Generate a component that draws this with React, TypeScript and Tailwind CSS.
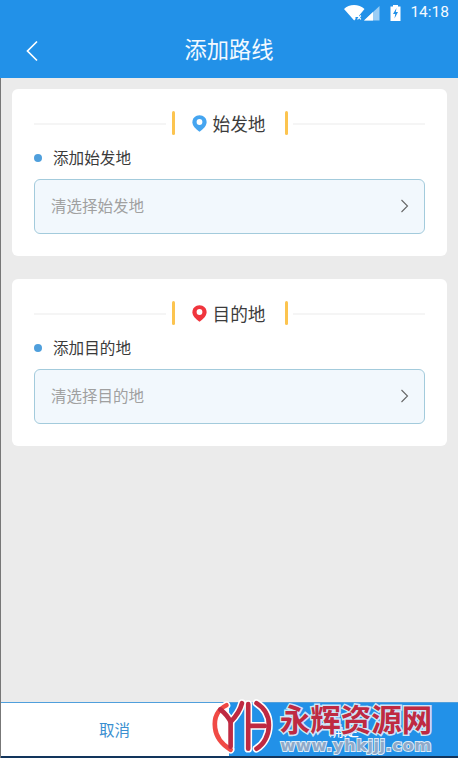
import React from "react";

const cjk = "font-['Noto_Sans_CJK_SC','Noto_Sans',sans-serif]";

const Pin: React.FC<{ color: string }> = ({ color }) => (
  <svg width="15" height="17" viewBox="0 0 15 17" className="shrink-0">
    <path
      d="M7.5 0.3C3.4 0.3 0.4 3.3 0.4 7.2c0 3.6 3.6 6.9 7.1 9.6 3.5-2.7 7.1-6 7.1-9.6C14.6 3.3 11.6 0.3 7.5 0.3z"
      fill={color}
    />
    <circle cx="7.5" cy="7" r="2.9" fill="#fff" />
  </svg>
);

interface RouteCardProps {
  title: string;
  label: string;
  placeholder: string;
  pinColor: string;
}

const RouteCard: React.FC<RouteCardProps> = ({ title, label, placeholder, pinColor }) => (
  <div className="ml-3 mr-[11px] h-[167px] rounded-[6px] bg-white px-[22px] pt-[22px]">
    <div className="flex h-6 items-center">
      <div className="mt-0.5 h-0.5 flex-1 bg-[#f5f5f5]" />
      <div className="ml-[6px] h-6 w-[3px] rounded-sm bg-[#fcc44f]" />
      <div className="flex w-[110px] items-center justify-center gap-[5px] pr-[2px]">
        <Pin color={pinColor} />
        <span className="text-[17.7px] leading-6 text-[#3c3c3c]">{title}</span>
      </div>
      <div className="mr-[5px] h-6 w-[3px] rounded-sm bg-[#fcc44f]" />
      <div className="mt-0.5 h-0.5 flex-1 bg-[#f5f5f5]" />
    </div>
    <div className="mt-[10px] flex h-6 items-center">
      <div className="mt-px h-2 w-2 rounded-full bg-[#4f9fdc]" />
      <span className="ml-[11px] text-[15.6px] leading-6 text-[#3a3a3a]">{label}</span>
    </div>
    <div className="mt-[10px] flex h-[55px] items-center justify-between rounded-[6px] border border-[#a3cbdc] bg-[#f2f8fd] pb-px pl-[16px] pr-[15px]">
      <span className="text-[15.5px] text-[#a0a0a0]">{placeholder}</span>
      <svg width="9" height="14" viewBox="0 0 9 14" fill="none">
        <path d="M1.500 1 7.500 7 1.500 13" stroke="#666" strokeWidth="1.100" />
      </svg>
    </div>
  </div>
);

const StatusBar: React.FC = () => (
  <div className="flex h-[26px] items-center justify-end pr-[9px]">
    <svg width="36" height="17" viewBox="0 0 36 17" className="mb-[2px]">
      <path d="M0 5C5 -0.5 15 -0.5 20.500 5L14 13h-2.500v2L10.200 16.500z" fill="#fff" />
      <path d="M13.500 11.500l3.400 3.800m0-3.800-3.400 3.800" stroke="#fff" strokeWidth="1.200" />
      <path d="M20 16.500 35.500 2v14.500z" fill="#fff" fillOpacity="0.55" />
      <path d="M20 16.500 29 8V16.500z" fill="#fff" />
    </svg>
    <svg width="11" height="16" viewBox="0 0 11 16" className="mb-[1px] ml-[10px]">
      <path d="M3 0h5v1.500h2.500V16H.5V1.500H3z" fill="#fff" />
      <path d="M6.500 3 3 9h2.200L4.500 13.500 8 7H5.800z" fill="#2291e8" />
    </svg>
    <span className="ml-[9px] font-['Roboto',sans-serif] text-[15.5px] text-[#f4faff]">
      14:18
    </span>
  </div>
);

const Watermark: React.FC = () => (
  <div className="pointer-events-none absolute bottom-0 left-[213px] h-[58px] w-[225px]">
    <svg width="58" height="56" viewBox="0 0 56 52" className="absolute left-0 top-0 overflow-visible">
      <g fill="none" strokeLinecap="round" stroke="#fff" strokeWidth="7.500">
        <path d="M13 4C3 9 1 18 2 26c1 9 7 16 15 21" />
        <path d="M28 2C26 10 22 15 17 20" />
        <path d="M7 8C12 12 15 16 17 20V44" />
        <path d="M42 2c8 5 12 13 12 21 0 10-5 19-12 23" />
        <path d="M34 3V46M34 24H50" />
      </g>
      <g fill="none" strokeLinecap="round">
        <path d="M13 4C3 9 1 18 2 26c1 9 7 16 15 21" stroke="#f04a45" strokeWidth="4.500" />
        <path d="M28 2C26 10 22 15 17 20" stroke="#bf2a42" strokeWidth="4.500" />
        <path d="M7 8C12 12 15 16 17 20V44" stroke="#bf2a42" strokeWidth="4.500" />
        <path d="M42 2c8 5 12 13 12 21 0 10-5 19-12 23" stroke="#bf2a42" strokeWidth="4.500" />
        <path d="M34 3V46M34 24H50" stroke="#bf2a42" strokeWidth="4.500" />
      </g>
    </svg>
    <div className="ml-[66px] flex w-[154px] flex-col items-center">
      <span className="text-[30.5px] font-bold leading-[36px] text-[#bf2a42] [-webkit-text-stroke:3px_#cfe6f7] [paint-order:stroke_fill]">
        永辉资源网
      </span>
      <span className="mt-[2px] font-['DejaVu_Sans',sans-serif] text-[16.5px] font-bold leading-[16px] tracking-[0.4px] text-[#8fa9c8] [-webkit-text-stroke:2px_#dcebf7] [paint-order:stroke_fill]">
        www.yhkjjj.com
      </span>
    </div>
  </div>
);

export default function App() {
  return (
    <div className={`relative flex h-[758px] w-[458px] flex-col overflow-hidden bg-[#ebebeb] ${cjk}`}>
      <div className="h-[78px] bg-[#2291e8]">
        <StatusBar />
        <div className="relative flex h-[52px] items-center justify-center pb-[6px]">
          <svg width="14" height="22" viewBox="0 0 14 22" fill="none" className="absolute left-[25px] top-[14px]">
            <path d="M12 1.500 2.500 11 12 20.500" stroke="#fff" strokeWidth="1.700" />
          </svg>
          <span className="text-[22.300px] text-[#f2f9ff]">添加路线</span>
        </div>
      </div>

      <div className="flex flex-1 flex-col gap-[23px] pt-[11px]">
        <RouteCard title="始发地" label="添加始发地" placeholder="清选择始发地" pinColor="#45a5f0" />
        <RouteCard title="目的地" label="添加目的地" placeholder="清选择目的地" pinColor="#f0353d" />
      </div>

      <div className="flex h-[56px] border-t border-[#4f9fdc] border-b-[2px] border-b-[#12355c]">
        <div className="flex w-[229px] items-center justify-center bg-white text-[15.5px] text-[#3a8fd0]">取消</div>
        <div className="flex flex-1 items-center justify-center bg-[#2291e8] text-[15.5px] text-white">确定</div>
      </div>
      <Watermark />
      <div className="absolute bottom-0 left-0 top-[78px] w-px bg-[#777]" />
    </div>
  );
}
